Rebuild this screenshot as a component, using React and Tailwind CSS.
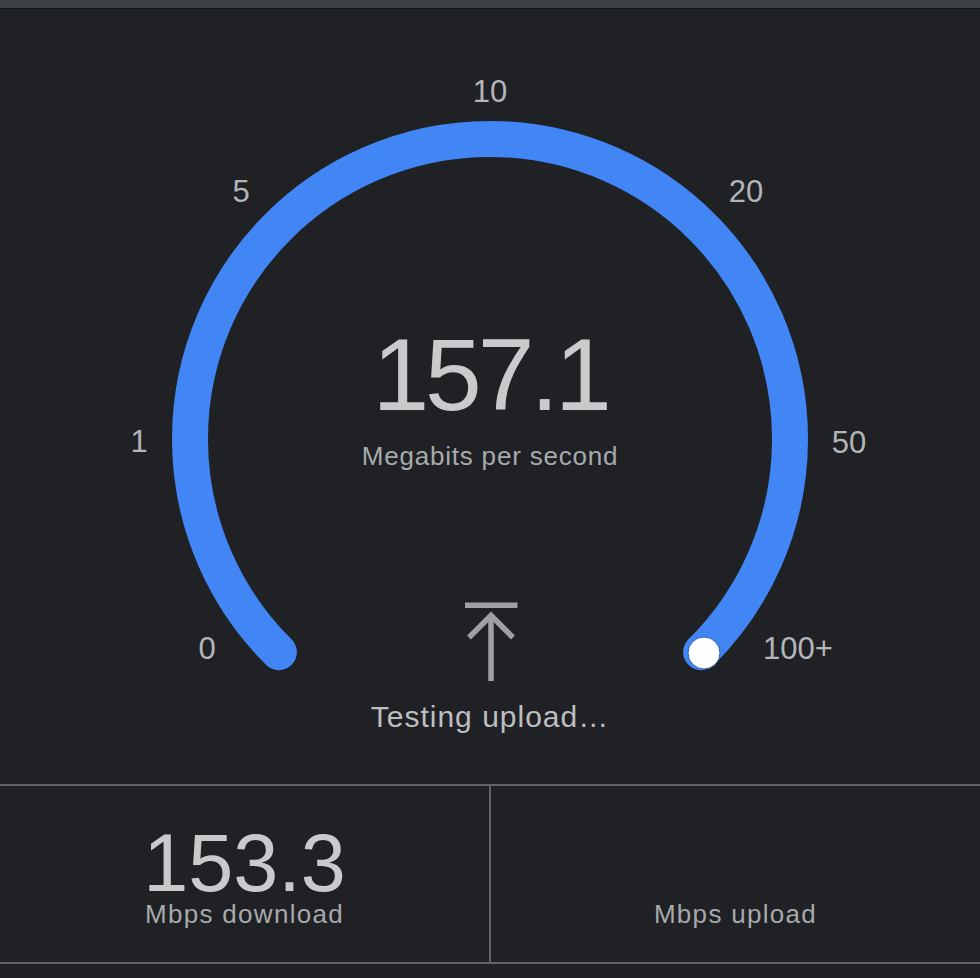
import React from "react";

const FONT = { fontFamily: '"Liberation Sans", Arial, Helvetica, sans-serif' };

function Label({ x, y, children }) {
  return (
    <div
      className="absolute -translate-x-1/2 -translate-y-1/2 text-[31px] leading-none text-[#b3b5b8] whitespace-nowrap"
      style={{ left: x, top: y - 9 }}
    >
      {children}
    </div>
  );
}

function UploadIcon() {
  return (
    <svg width="56" height="84" viewBox="0 0 56 84" className="block">
      <rect x="3" y="3.5" width="52.5" height="5.5" fill="#9ea1a4" />
      <line x1="29" y1="18" x2="29" y2="82" stroke="#9ea1a4" strokeWidth="5.5" />
      <polyline
        points="7,38.5 29,16.5 51,38.5"
        fill="none"
        stroke="#9ea1a4"
        strokeWidth="5.5"
        strokeLinejoin="miter"
      />
    </svg>
  );
}

export default function App() {
  return (
    <div className="w-[980px] h-[978px] bg-[#202124] overflow-hidden" style={FONT}>
      <div className="h-[8px] bg-[#3c4043] border-b border-[#141517] box-content" />
      <div className="relative h-[775px] flex flex-col items-center">
        <svg
          className="absolute left-0 top-0"
          width="980"
          height="775"
          viewBox="0 0 980 775"
        >
          <path
            d="M 278.87 643.13 A 300 300 0 1 1 701.13 643.13"
            fill="none"
            stroke="#4285f4"
            strokeWidth="36"
            strokeLinecap="round"
          />
          <circle cx="704" cy="644" r="16" fill="#ffffff" stroke="#2f5fb8" strokeWidth="1" />
        </svg>
        <Label x={207} y={648}>0</Label>
        <Label x={139} y={441}>1</Label>
        <Label x={241} y={191}>5</Label>
        <Label x={490} y={91}>10</Label>
        <Label x={746} y={191}>20</Label>
        <Label x={849} y={442}>50</Label>
        <Label x={798} y={648}>100+</Label>

        <div className="relative pt-[315px] text-[102px] leading-none tracking-[-4px] text-[#c8cacc]">
          157.1
        </div>
        <div className="relative mt-[17px] text-[26px] leading-none tracking-[0.8px] text-[#a7aaad]">
          Megabits per second
        </div>
        <div className="relative mt-[130px]">
          <UploadIcon />
        </div>
        <div className="relative mt-[19px] text-[30px] leading-none tracking-[1px] text-[#bcbec0]">
          Testing upload…
        </div>
      </div>
      <div className="border-t-2 border-b-2 border-[#5f6368] grid grid-cols-[489px_2px_489px] h-[180px]">
        <div className="flex flex-col items-center pt-[39px]">
          <div className="text-[81px] leading-[76px] text-[#c8cacc]">153.3</div>
          <div className="text-[26px] leading-none tracking-[1.3px] text-[#a7aaad]">
            Mbps download
          </div>
        </div>
        <div className="bg-[#5f6368]" />
        <div className="flex flex-col items-center pt-[39px]">
          <div className="h-[76px]" />
          <div className="text-[26px] leading-none tracking-[1.3px] text-[#a7aaad]">
            Mbps upload
          </div>
        </div>
      </div>
    </div>
  );
}
